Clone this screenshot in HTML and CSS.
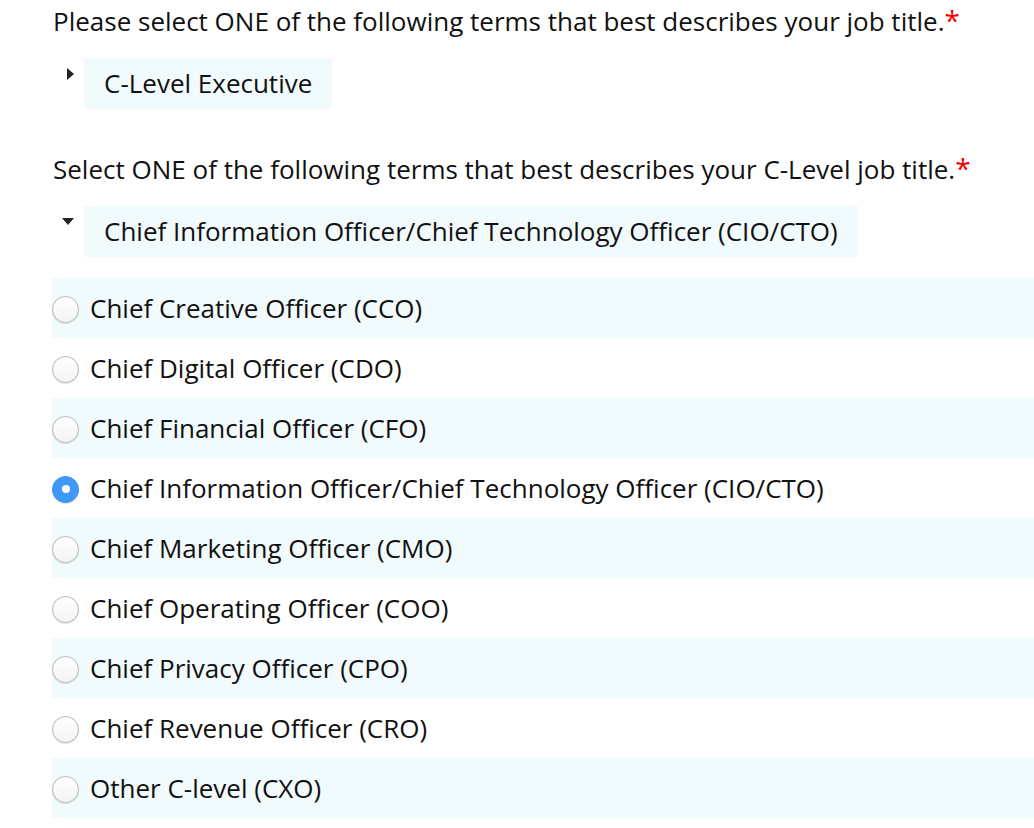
FILE: index.html
```html
<!DOCTYPE html>
<html>
<head>
<meta charset="utf-8">
<link rel="stylesheet" href="styles.css">
</head>
<body>
<div class="form">
  <div class="question">
    <div class="q-label">Please select ONE of the following terms that best describes your job title.<span class="req">*</span></div>
    <div class="picker">
      <span class="caret caret-right"></span>
      <div class="picked">C-Level Executive</div>
    </div>
  </div>
  <div class="question second">
    <div class="q-label">Select ONE of the following terms that best describes your C-Level job title.<span class="req">*</span></div>
    <div class="picker">
      <span class="caret caret-down"></span>
      <div class="picked">Chief Information Officer/Chief Technology Officer (CIO/CTO)</div>
    </div>
  </div>
  <ul class="options">
    <li class="opt shaded"><span class="radio"></span><span class="opt-text">Chief Creative Officer (CCO)</span></li>
    <li class="opt"><span class="radio"></span><span class="opt-text">Chief Digital Officer (CDO)</span></li>
    <li class="opt shaded"><span class="radio"></span><span class="opt-text">Chief Financial Officer (CFO)</span></li>
    <li class="opt"><span class="radio checked"></span><span class="opt-text">Chief Information Officer/Chief Technology Officer (CIO/CTO)</span></li>
    <li class="opt shaded"><span class="radio"></span><span class="opt-text">Chief Marketing Officer (CMO)</span></li>
    <li class="opt"><span class="radio"></span><span class="opt-text">Chief Operating Officer (COO)</span></li>
    <li class="opt shaded"><span class="radio"></span><span class="opt-text">Chief Privacy Officer (CPO)</span></li>
    <li class="opt"><span class="radio"></span><span class="opt-text">Chief Revenue Officer (CRO)</span></li>
    <li class="opt shaded"><span class="radio"></span><span class="opt-text">Other C-level (CXO)</span></li>
  </ul>
</div>
</body>
</html>
```
FILE: styles.css
```css
html, body {
  margin: 0;
  padding: 0;
  background: #ffffff;
}
body {
  font-family: "Open Sans", "Noto Sans", sans-serif;
  color: #111111;
  font-size: 26px;
}
.form {
  padding: 5px 0 0 52px;
}
.q-label {
  height: 32px;
  line-height: 32px;
  padding-left: 1px;
}
.req {
  color: #f20000;
  font-size: 28px;
  line-height: 0;
}
.second {
  margin-top: 44px;
}
.picker {
  display: flex;
  align-items: flex-start;
  margin-top: 21px;
}
.caret {
  width: 32px;
  height: 51px;
  position: relative;
  flex: none;
}
.caret-right::before {
  content: "";
  position: absolute;
  left: 15px;
  top: 10px;
  border-top: 6px solid transparent;
  border-bottom: 6px solid transparent;
  border-left: 7px solid #222;
}
.caret-down::before {
  content: "";
  position: absolute;
  left: 10px;
  top: 12px;
  border-left: 6.5px solid transparent;
  border-right: 6.5px solid transparent;
  border-top: 7px solid #222;
}
.picked {
  background: #f1fafc;
  height: 51px;
  line-height: 51px;
  padding: 0 20px;
}
.options {
  list-style: none;
  margin: 21px 0 0 0;
  padding: 0;
}
.opt {
  display: flex;
  align-items: center;
  height: 60px;
}
.opt.shaded {
  background: #f1fafc;
}
.radio {
  width: 27px;
  height: 27px;
  box-sizing: border-box;
  border-radius: 50%;
  border: 1px solid #b5b5b5;
  background: linear-gradient(#ffffff, #f4f4f4);
  box-shadow: 0 1px 1px rgba(0,0,0,0.12);
  margin: 2px 11px 0 0;
  flex: none;
  position: relative;
}
.radio.checked {
  border-color: #3a93f5;
  background: #3d98f8;
}
.radio.checked::after {
  content: "";
  position: absolute;
  width: 8px;
  height: 8px;
  border-radius: 50%;
  background: #fff;
  left: 8.5px;
  top: 8.5px;
}
.opt-text {
  line-height: 32px;
}
```
